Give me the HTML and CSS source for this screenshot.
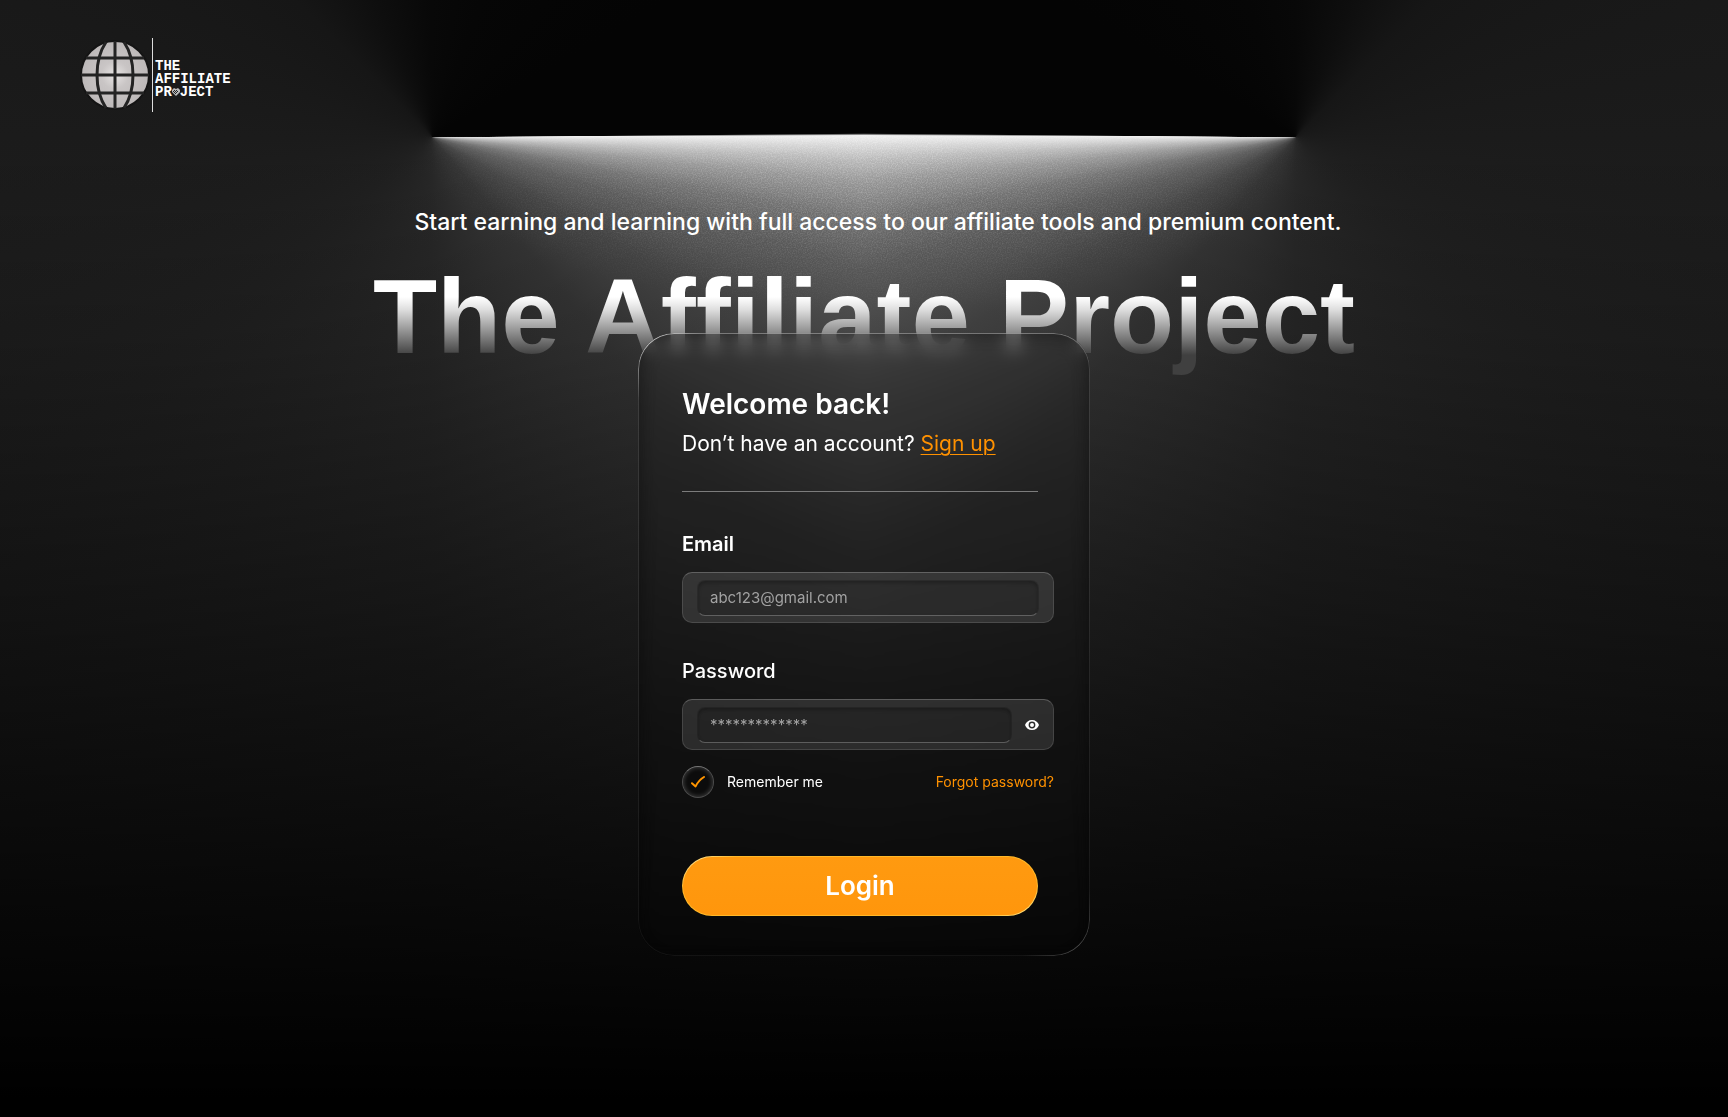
FILE: index.html
```html
<!DOCTYPE html>
<html lang="en">
<head>
<meta charset="utf-8">
<meta name="viewport" content="width=device-width, initial-scale=1">
<title>The Affiliate Project – Login</title>
<link rel="stylesheet" href="styles.css">
</head>
<body>
<div class="page">
  <div class="lamp" aria-hidden="true">
    <div class="lamp-half lamp-left"></div>
    <div class="lamp-half lamp-right"></div>
    <svg class="grain" width="100%" height="100%">
      <filter id="noise"><feTurbulence type="fractalNoise" baseFrequency="0.8" numOctaves="2"/><feColorMatrix type="matrix" values="0 0 0 0 1  0 0 0 0 1  0 0 0 0 1  1.6 0 0 0 -0.6"/></filter>
      <rect width="100%" height="100%" filter="url(#noise)"/>
    </svg>
  </div>

  <header class="site-header">
    <a class="brand" href="#" aria-label="The Affiliate Project">
      <svg class="globe" viewBox="0 0 70 70" aria-hidden="true">
        <defs>
          <radialGradient id="globeFill"><stop offset="0" stop-color="#e6e3e2"/><stop offset=".4" stop-color="#c9c5c5"/><stop offset="1" stop-color="#bcb8b8"/></radialGradient>
        </defs>
        <circle cx="35" cy="35" r="34" fill="url(#globeFill)" stroke="#141414" stroke-width="2"/>
        <g fill="none" stroke="#232323" stroke-width="3">
          <path d="M35 1v68M1 35h68M6 18h58M6 53h58"/>
          <path d="M26 2C14 20 14 50 26 68M44 2c12 18 12 48 0 66"/>
        </g>
      </svg>
      <span class="brand-name">
        <span>THE</span>
        <span>AFFILIATE</span>
        <span class="brand-row">PR<svg class="heart" viewBox="0 0 8 8" aria-hidden="true"><path d="M4 8 0 4V2l2-2 2 1 2-1 2 2v2z" fill="#bbb"/><path d="M1 3h1v1H1zM3 3h1v1H3zM5 3h1v1H5zM2 4h1v1H2zM4 4h1v1H4zM3 5h1v1H3zM2 2h1v1H2zM4 2h1v1H4z" fill="#222"/></svg>JECT</span>
      </span>
    </a>
  </header>

  <main class="hero">
    <p class="tagline">Start earning and learning with full access to our affiliate tools and premium content.</p>
    <h1 class="title">The Affiliate Project</h1>

    <form class="card" action="#">
      <h2 class="welcome">Welcome back!</h2>
      <p class="signup">Don’t have an account? <a href="#">Sign up</a></p>
      <hr class="rule">

      <label class="label label-strong" for="email">Email</label>
      <div class="field">
        <input class="input" id="email" type="email" placeholder="abc123@gmail.com">
      </div>

      <label class="label" for="password">Password</label>
      <div class="field field-password">
        <input class="input" id="password" type="password" placeholder="*************">
        <button class="reveal" type="button" aria-label="Show password">
          <svg viewBox="0 0 14 10" aria-hidden="true"><path fill="#fff" fill-rule="evenodd" d="M7 0C3.700 0 1 2 0 5c1 3 3.700 5 7 5s6-2 7-5C13 2 10.300 0 7 0zm0 8.400a3.400 3.400 0 1 1 0-6.800 3.400 3.400 0 0 1 0 6.800zm0-1.400a2 2 0 1 0 0-4 2 2 0 0 0 0 4z"/></svg>
        </button>
      </div>

      <div class="options">
        <label class="remember">
          <span class="check">
            <input type="checkbox" checked>
            <svg viewBox="0 0 14 12" aria-hidden="true"><path d="M1 7.200 4.600 10.400C6.500 6.500 9.500 3 13 1" fill="none" stroke="#ff9500" stroke-width="2" stroke-linecap="round" stroke-linejoin="round"/></svg>
          </span>
          Remember me
        </label>
        <a class="forgot" href="#">Forgot password?</a>
      </div>

      <button class="login" type="submit">Login</button>
    </form>
  </main>
</div>
</body>
</html>
```
FILE: styles.css
```css
* {
  box-sizing: border-box;
}

body {
  margin: 0;
  background: #000;
  color: #fff;
  font-family: Inter, "Liberation Sans", sans-serif;
}

.page {
  position: relative;
  isolation: isolate;
  min-height: 100vh;
  overflow: hidden;
}

/* Light strip: one angular gradient per side, mirrored in the middle */
.lamp {
  position: absolute;
  inset: 0;
  z-index: -1;
  display: flex;
}

.lamp-half {
  width: 50%;
  background:
    linear-gradient(rgba(0, 0, 0, 0) 140px, rgba(0, 0, 0, .14) 340px, rgba(0, 0, 0, .56) 700px, #000 1100px),
    conic-gradient(from 0deg at 50% 137px,
      #080808 0deg, #060606 20deg, #040404 60deg, #040404 89.500deg,
      #f0f0f0 89.800deg, #dadada 91deg, #bcbcbc 93deg, #9a9a9a 96deg,
      #767676 101deg, #606060 107deg, #484848 120deg,
      #363636 140deg, #282828 180deg, #202020 230deg,
      #1b1b1b 270deg, #161616 315deg, #0e0e0e 338deg, #080808 360deg);
}

.lamp-right {
  transform: scaleX(-1);
}

.grain {
  position: absolute;
  inset: 136px 0 auto;
  height: 180px;
  opacity: .45;
  mask-image: radial-gradient(ellipse 26% 100% at 50% 0, #000, transparent);
}

.site-header {
  display: flex;
  padding: 38px 80px 0;
}

.brand {
  display: flex;
  align-items: center;
  gap: 2px;
  color: #fff;
  text-decoration: none;
}

.globe {
  width: 70px;
  height: 70px;
}

.brand-name {
  display: flex;
  flex-direction: column;
  justify-content: center;
  height: 74px;
  padding: 8px 0 0 2px;
  border-left: 1px solid #ddd;
  font: 700 14px/13px "Liberation Mono", monospace;
}

.brand-row {
  display: flex;
  align-items: center;
}

.heart {
  width: 8px;
  height: 8px;
}

.hero {
  display: flex;
  flex-direction: column;
  align-items: center;
  padding: 94px 24px 160px;
}

.tagline {
  margin: 0;
  padding-left: 28px;
  font-size: 23px;
  font-weight: 500;
  line-height: 32px;
  text-align: center;
}

.title {
  margin: 23px 0 0;
  padding-bottom: 8px;
  background: linear-gradient(#fff 36px, #e0e0e0 48px, #404040 94px);
  background-clip: text;
  color: transparent;
  font: 700 105px/112px "Liberation Sans", sans-serif;
  text-align: center;
}

.card {
  position: relative;
  display: flex;
  flex-direction: column;
  width: 100%;
  max-width: 452px;
  margin-top: -48px;
  padding: 53px 36px 40px 44px;
  border-radius: 36px;
  background: rgba(0, 0, 0, .06);
  box-shadow: inset 0 0 20px rgba(0, 0, 0, .45);
  backdrop-filter: blur(8px);
}

/* Hairline edge, brightest in the top left corner */
.card::before {
  content: "";
  position: absolute;
  inset: 0;
  padding: 1px;
  border-radius: inherit;
  background:
    radial-gradient(circle at 8px 8px, rgba(255, 255, 255, .6), transparent 60px),
    radial-gradient(circle at calc(100% - 8px) calc(100% - 8px), rgba(255, 255, 255, .24), transparent 60px),
    linear-gradient(rgba(255, 255, 255, .35), rgba(255, 255, 255, .14) 36px, rgba(255, 255, 255, .06));
  mask: linear-gradient(#000 0 0) content-box exclude, linear-gradient(#000 0 0);
  pointer-events: none;
}

.welcome {
  margin: 0 0 8px;
  font-size: 28px;
  font-weight: 600;
  line-height: 36px;
}

.signup {
  margin: 0;
  font-size: 21px;
  line-height: 28px;
}

.signup a {
  color: #ff9100;
  text-underline-offset: 3px;
  text-decoration-thickness: 1px;
}

.rule {
  width: calc(100% - 16px);
  margin: 33px 0 40px;
  border: 0;
  border-top: 1px solid #7c7c7c;
}

.label {
  margin-bottom: 16px;
  font-size: 20px;
  font-weight: 500;
  line-height: 24px;
}

.label-strong {
  font-weight: 600;
}

.field {
  display: flex;
  align-items: center;
  height: 51px;
  margin-bottom: 36px;
  padding: 0 14px;
  border: 1px solid rgba(255, 255, 255, .12);
  border-top-color: rgba(255, 255, 255, .22);
  border-radius: 10px;
  background: rgba(255, 255, 255, .11);
}

.field-password {
  margin-bottom: 16px;
}

.input {
  flex: 1;
  min-width: 0;
  height: 36px;
  padding: 0 12px;
  border: 1px solid transparent;
  border-bottom-color: rgba(255, 255, 255, .26);
  border-radius: 8px;
  background: rgba(0, 0, 0, .18);
  box-shadow: inset 0 2px 4px rgba(0, 0, 0, .3);
  color: #fff;
  font: 400 15px/20px Inter, sans-serif;
}

.input::placeholder {
  color: #a2a2a2;
  opacity: 1;
}

.reveal {
  display: grid;
  place-items: center;
  width: 14px;
  height: 24px;
  margin-left: 13px;
  padding: 0;
  border: 0;
  background: none;
}

.reveal svg {
  width: 14px;
  height: 10px;
}

.options {
  display: flex;
  align-items: center;
  justify-content: space-between;
  margin-bottom: 58px;
  font-size: 14px;
  line-height: 20px;
}

.remember {
  display: flex;
  align-items: center;
  gap: 13px;
}

.check {
  display: grid;
  place-items: center;
  width: 32px;
  height: 32px;
}

.check input,
.check svg {
  grid-area: 1 / 1;
}

.check input {
  appearance: none;
  width: 32px;
  height: 32px;
  margin: 0;
  border: 1px solid #4c4c4c;
  border-top-color: #777;
  border-radius: 50%;
  background: #0c0c0c;
  box-shadow: inset 0 0 5px rgba(255, 255, 255, .25);
}

.check svg {
  width: 14px;
  height: 12px;
  pointer-events: none;
}

.forgot {
  color: #ff9100;
  text-decoration: none;
}

.login {
  width: calc(100% - 16px);
  height: 60px;
  padding: 0;
  border: 1px solid transparent;
  border-radius: 30px;
  background:
    linear-gradient(#ff9a10, #ff960c) padding-box,
    linear-gradient(150deg, #fff0b0, #ffb828 12%, #ffb828 88%, #ffee9c) border-box;
  color: #fff;
  font: 600 26px/36px Inter, sans-serif;
}
```
